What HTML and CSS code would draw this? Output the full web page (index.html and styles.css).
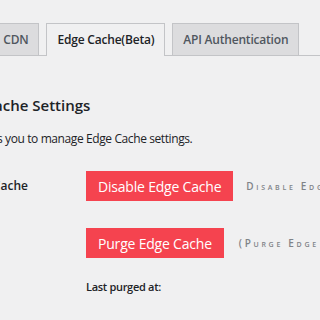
FILE: index.html
```html
<!DOCTYPE html>
<html lang="en">
<head>
  <meta charset="UTF-8" />
  <title>Edge Cache Settings</title>
  <link rel="stylesheet" href="styles.css">
</head>
<body>
  <div class="wrap">
    <nav class="tabs">
      <a class="tab">General</a>
      <a class="tab">CDN</a>
      <a class="tab tab--active">Edge Cache(Beta)</a>
      <a class="tab">API Authentication</a>
    </nav>

    <h2 class="title">Edge Cache Settings</h2>
    <p class="desc">This allows you to manage Edge Cache settings.</p>

    <div class="form">
      <div class="form__label">Edge Cache</div>
      <div class="form__field">
        <div class="action">
          <button class="btn">Disable Edge Cache</button>
          <span class="hint">Disable Edge Cache</span>
        </div>
        <div class="action">
          <button class="btn">Purge Edge Cache</button>
          <span class="hint">(Purge Edge Cache)</span>
        </div>
        <p class="meta">Last purged at:</p>
      </div>
    </div>
  </div>
</body>
</html>
```

FILE: styles.css
```css
html, body { margin:0; padding:0; }
body {
  width:320px; height:320px; overflow:hidden;
  background:#f0f0f1;
  color:#1d2327;
  font-family:"Open Sans", "Noto Sans", sans-serif;
}

.wrap {
  margin-left:-54px;
  width:640px;
  padding-top:23px;
}

/* tabs */
.tabs {
  display:flex;
  gap:7px;
  margin-left:-27px;
  border-bottom:1px solid #c3c4c7;
}
.tab {
  height:31px;
  line-height:31px;
  padding:0 10px;
  border:1px solid #c3c4c7;
  border-bottom:none;
  background:#dcdcde;
  color:#50575e;
  font-size:12px;
  font-weight:600;
  letter-spacing:-.2px;
}
.tab--active {
  background:#f0f0f1;
  color:#1d2327;
  margin-bottom:-1px;
  height:32px;
}

.title {
  margin:37px 0 0;
  font-size:15px;
  font-weight:600;
  line-height:24px;
}
.desc {
  margin:13px 0 0;
  font-size:12px;
  line-height:18px;
  letter-spacing:-.4px;
}

/* form table */
.form {
  display:grid;
  grid-template-columns:140px auto;
  margin-top:23px;
}
.form__label {
  padding:6px 0 0 16px;
  font-size:12px;
  font-weight:600;
}
.action {
  display:flex;
  align-items:center;
  gap:13px;
  margin-bottom:27px;
}
.action + .action .hint { margin-left:2px; }
.btn {
  height:30px;
  padding:0 12px;
  border:none;
  background:#f5434f;
  color:#fff;
  font-family:inherit;
  font-size:14px;
  letter-spacing:-.2px;
}
.hint {
  color:#7f8388;
  font-size:10px;
  font-weight:600;
  font-variant:small-caps;
  letter-spacing:2.7px;
}
.meta {
  margin:-6px 0 0;
  font-size:11px;
  font-weight:600;
  letter-spacing:-.3px;
}
```
